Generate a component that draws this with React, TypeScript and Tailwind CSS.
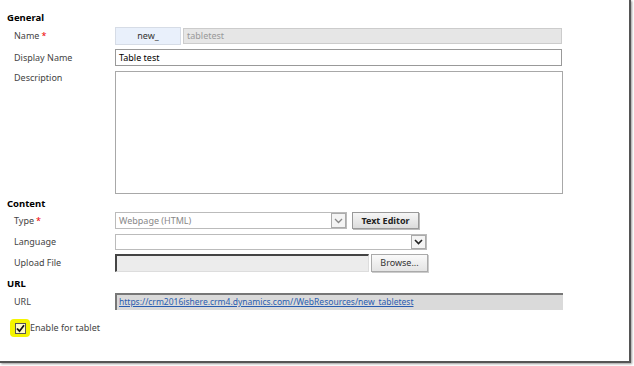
export default function App() {
  const label = "w-[115px] shrink-0 pl-[14px] text-[9px] text-[#444]";
  return (
    <div className="h-[366px] w-[634px] bg-white" style={{ fontFamily: '"Noto Sans", sans-serif' }}>
      <div className="h-[363px] w-[631px] border-r-[2px] border-b-[2px] border-[#555] bg-white pt-[11px] shadow-[1px_1px_2px_rgba(0,0,0,0.4)]">
        <div className="pl-[7px] text-[9.5px] leading-[13px] font-bold text-black">General</div>
        <div className="mt-[3px] flex items-center">
          <div className={label}>
            Name<span className="ml-[2px] text-[#e00]">*</span>
          </div>
          <div className="flex h-[18px] w-[66px] items-center justify-center border border-[#d6dce6] bg-[#e9f0fb] text-[9px] text-[#333]">
            new_
          </div>
          <div className="ml-[2px] flex h-[16px] w-[379px] items-center border border-[#ccc] bg-[#e6e6e6] px-[3px] text-[9px] text-[#999]">
            tabletest
          </div>
        </div>
        <div className="mt-[4px] flex items-center">
          <div className={label}>Display Name</div>
          <div className="flex h-[17px] w-[447px] items-center border border-[#999] bg-white px-[3px] text-[9px] text-black">
            Table test
          </div>
        </div>
        <div className="mt-[5px] flex items-start">
          <div className={label}>Description</div>
          <div className="h-[123px] w-[448px] border border-[#a8a8a8] bg-white" />
        </div>
        <div className="mt-[3px] pl-[7px] text-[9.5px] leading-[13px] font-bold text-black">Content</div>
        <div className="mt-[2px] flex items-center">
          <div className={label}>
            Type<span className="ml-[2px] text-[#e00]">*</span>
          </div>
          <div className="flex h-[17px] w-[232px] items-center border border-[#bbb] bg-white">
            <span className="flex-1 px-[3px] text-[9px] text-[#888]">Webpage (HTML)</span>
            <span className="flex h-[15px] w-[15px] items-center justify-center border border-[#aaa] bg-[#f4f4f4]">
              <svg width="9" height="6" viewBox="0 0 9 6">
                <path d="M1 1 L4.5 4.5 L8 1" fill="none" stroke="#888" strokeWidth="1.3" />
              </svg>
            </span>
          </div>
          <button className="ml-[5px] h-[17px] w-[67px] border border-[#999] bg-gradient-to-b from-[#f6f6f6] to-[#dcdcdc] text-[9px] font-bold text-[#222] shadow-[1px_1px_0_#bbb]">
            Text Editor
          </button>
        </div>
        <div className="mt-[5px] flex items-center">
          <div className={label}>Language</div>
          <div className="flex h-[16px] w-[312px] items-center justify-end border border-[#bbb] bg-white">
            <span className="flex h-[14px] w-[15px] items-center justify-center border border-[#aaa] bg-[#f4f4f4]">
              <svg width="9" height="6" viewBox="0 0 9 6">
                <path d="M1 1 L4.5 4.5 L8 1" fill="none" stroke="#222" strokeWidth="1.6" />
              </svg>
            </span>
          </div>
        </div>
        <div className="mt-[4px] flex items-center">
          <div className={label}>Upload File</div>
          <div className="h-[18px] w-[254px] border-t-[2px] border-r border-b border-l-[2px] border-[#444] border-r-[#ddd] border-b-[#ddd] bg-[#ececec]" />
          <button className="ml-[2px] h-[18px] w-[57px] border border-[#aaa] bg-gradient-to-b from-[#fafafa] to-[#e4e4e4] text-[9px] text-[#333] shadow-[1px_1px_0_#ccc]">
            Browse...
          </button>
        </div>
        <div className="mt-[5px] pl-[7px] text-[9.5px] leading-[13px] font-bold text-black">URL</div>
        <div className="mt-[3px] flex items-center">
          <div className={label}>URL</div>
          <div className="flex h-[17px] w-[448px] items-center border-t-[2px] border-l-[2px] border-[#777] bg-[#dadada] px-[2px] text-[8.5px]">
            <a className="text-[#2a5db0] underline">
              https://crm2016ishere.crm4.dynamics.com//WebResources/new_tabletest
            </a>
          </div>
        </div>
        <div className="mt-[9px] flex items-center pl-[10px]">
          <span className="flex h-[18px] w-[20px] items-center justify-center rounded-[4px] bg-[#f5f500]">
            <span className="flex h-[11px] w-[11px] items-center justify-center border border-[#555] bg-[#fffbc8]">
              <svg width="9" height="9" viewBox="0 0 9 9">
                <path d="M1 4.5 L3.5 7.2 L8 1.3" fill="none" stroke="#111" strokeWidth="1.8" />
              </svg>
            </span>
          </span>
          <span className="text-[9px] text-[#444]">Enable for tablet</span>
        </div>
      </div>
    </div>
  );
}
